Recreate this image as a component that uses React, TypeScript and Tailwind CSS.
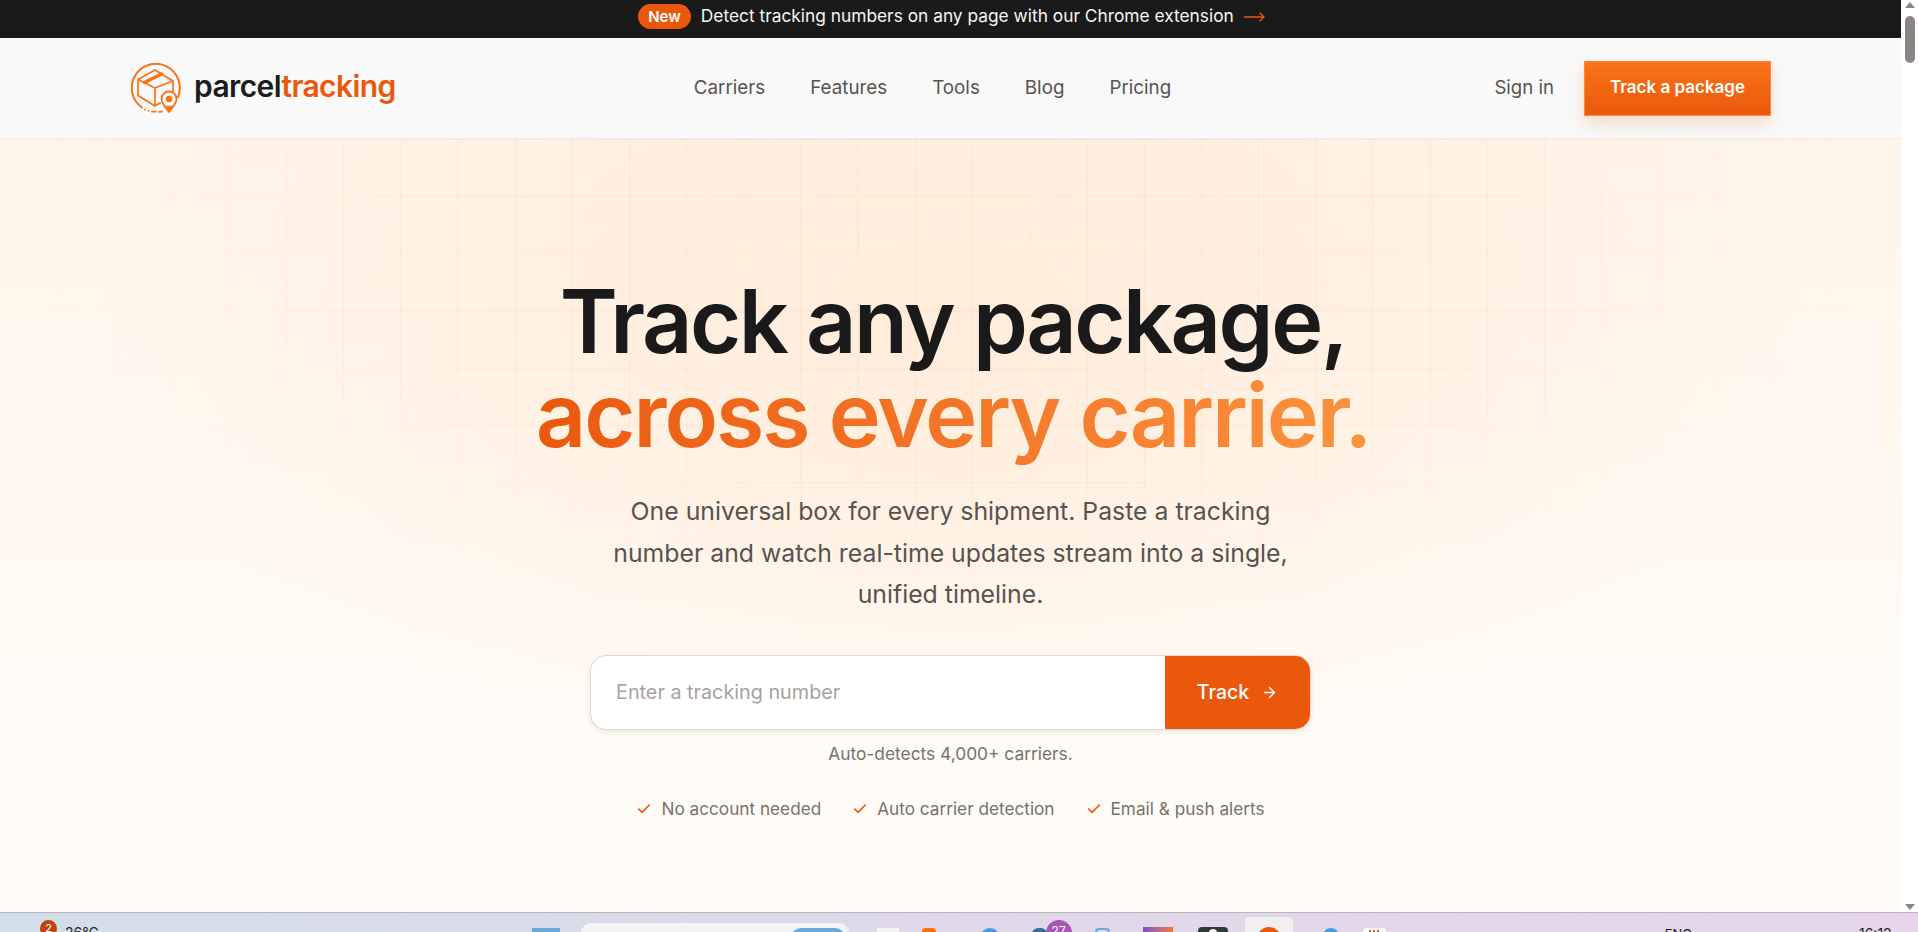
import React from 'react';
import { ArrowRight, Check } from 'lucide-react';

const navLinks = ['Carriers', 'Features', 'Tools', 'Blog', 'Pricing'];
const perks = ['No account needed', 'Auto carrier detection', 'Email & push alerts'];

const LogoMark: React.FC = () => (
  <svg viewBox="0 0 50 50" className="w-[50px] h-[50px] shrink-0" fill="none" stroke="#f97316" strokeLinecap="round" strokeLinejoin="round">
    <path d="M11 44.500A24 24 0 1 1 47 34" strokeWidth="2" />
    <path d="M14 46.500l.1 0M17.500 47.800l.1 0M21 48.700h4M28 48.800l3-.3" strokeWidth="1.800" />
    <path d="M24 7l18 11v10M24 7L7 16.500v16L24 43V25M7 16.500L24 25l18-7M24 43l5-3" strokeWidth="1.700" />
    <path d="M13.500 19.500l17-8.500" strokeWidth="3.500" />
    <path d="M38 49c-4.800-5.500-7.500-9-7.500-13a7.500 7.500 0 0 1 15 0c0 4-2.700 7.500-7.500 13z" fill="#f9f9f9" strokeWidth="1.800" />
    <path d="M34 43.500L38 49l4-5.500z" fill="#f97316" strokeWidth="1" />
    <circle cx="38" cy="36" r="3.300" fill="#f97316" stroke="none" />
  </svg>
);

const Header: React.FC = () => (
  <header className="h-[101px] shrink-0 flex items-center justify-between pl-[131px] pr-[130px] bg-[#f9f9f9] border-b border-[#ececec]">
    <div className="flex items-center gap-[14px]">
      <LogoMark />
      <span className="text-[30px] leading-none font-semibold tracking-[-0.6px] text-[#1c1c1c] pb-1 -ml-[1px]">
        parcel<span className="text-[#ea580c]">tracking</span>
      </span>
    </div>
    <nav className="flex items-center gap-[45px] -ml-[25px] text-[18.800px] font-normal text-[#57534e]">
      {navLinks.map((link) => (
        <a key={link}>{link}</a>
      ))}
    </nav>
    <div className="flex items-center gap-[30px]">
      <a className="text-[18.600px] font-normal text-[#57534e]">Sign in</a>
      <button className="w-[187px] h-[55px] bg-gradient-to-b from-[#f97316] to-[#ea580c] border border-[#fb8b3c] text-white text-[17px] font-semibold shadow-[0_8px_16px_rgba(234,88,12,0.18)]">
        Track a package
      </button>
    </div>
  </header>
);

const Hero: React.FC = () => (
  <main className="relative flex-1 min-h-0 flex flex-col items-center pt-[135px] bg-[radial-gradient(ellipse_45%_60%_at_50%_22%,#ffecda_0%,rgba(255,236,218,0)_100%),linear-gradient(to_bottom,#fff4e9_0%,#fff8f0_45%,#fffcf8_80%)]">
    <div className="absolute inset-0 bg-[linear-gradient(to_right,rgba(234,88,12,0.06)_1px,transparent_1px),linear-gradient(to_bottom,rgba(234,88,12,0.06)_1px,transparent_1px)] bg-[size:57.2px_57.2px] [mask-image:radial-gradient(ellipse_50%_50%_at_50%_12%,black_60%,transparent_100%)]" />
    <h1 className="relative pl-[5px] text-center text-[88px] leading-[94px] font-semibold tracking-[-2px] text-[#1a1a1a]">
      <span className="tracking-[-2.500px]">Track any package,</span>
      <br />
      <span className="bg-gradient-to-r from-[#ea580c] to-[#fb923c] bg-clip-text text-transparent">across every carrier.</span>
    </h1>
    <p className="relative mt-[29px] w-[700px] text-center text-[24.800px] leading-[41.600px] text-[#57534e]">
      One universal box for every shipment. Paste a tracking number and watch real-time updates stream into a single, unified timeline.
    </p>
    <div className="relative mt-[39px] w-[721px] h-[75px] flex rounded-2xl overflow-hidden bg-white border border-[#e0d8d2] shadow-[0_2px_6px_rgba(0,0,0,0.08)]">
      <div className="flex-1 flex items-center pl-[25px] pt-[1px] text-[19.800px] text-[#a8a29e]">Enter a tracking number</div>
      <button className="w-[145px] flex items-center justify-center gap-[12px] bg-[#ea580c] text-white text-[19.500px] font-medium">
        Track
        <ArrowRight size={17} />
      </button>
    </div>
    <p className="relative mt-[11px] text-[17.330px] leading-[26px] text-[#78716c]">Auto-detects 4,000+ carriers.</p>
    <ul className="relative mt-[29px] flex items-center gap-[31px] text-[17.200px] leading-[26px] text-[#78716c]">
      {perks.map((perk) => (
        <li key={perk} className="flex items-center gap-[9px]">
          <Check size={16} strokeWidth={2.5} className="text-[#ea580c]" />
          {perk}
        </li>
      ))}
    </ul>
  </main>
);

const Scrollbar: React.FC = () => (
  <div className="w-[17px] shrink-0 flex flex-col items-center justify-between bg-white pt-[2px] pb-[2px]">
    <div className="flex flex-col items-center">
      <div className="w-0 h-0 border-x-[5px] border-x-transparent border-b-[6px] border-b-[#8a8583]" />
      <div className="mt-[8px] w-[10px] h-[47px] rounded-full bg-[#8a8583]" />
    </div>
    <div className="w-0 h-0 border-x-[5px] border-x-transparent border-t-[6px] border-t-[#8a8583]" />
  </div>
);

// only the top few pixels of the Windows taskbar are visible in the shot
const Taskbar: React.FC = () => (
  <footer className="h-[20px] shrink-0 overflow-hidden border-t border-[#bdb5b9] bg-gradient-to-r from-[#d1dfe8] via-[#dfd8e8] via-50% to-[#e6d5ea] flex items-start text-[13px] text-[#222]">
    <div className="ml-[40px] mt-[7px] w-[17px] h-[17px] rounded-full bg-[#c2410c] text-white text-[11px] leading-[17px] text-center">2</div>
    <span className="ml-[8px] mt-[13px] leading-[14px] text-[14px]">26°C</span>
    <div className="ml-[433px] mt-[15px] w-[28px] h-[10px] bg-[#6aa9d8]" />
    <div className="ml-[21px] mt-[10px] w-[268px] h-[20px] rounded-full bg-[#f3f3f3] flex justify-end pr-[4px]">
      <div className="mt-[5px] w-[54px] h-[20px] rounded-full bg-[#6aa9d8]" />
    </div>
    <div className="ml-[28px] mt-[15px] w-[22px] h-[10px] bg-[#f4f4f4]" />
    <div className="ml-[23px] mt-[15px] w-[14px] h-[10px] rounded-t bg-[#f97316]" />
    <div className="ml-[44px] mt-[15px] w-[20px] h-[10px] rounded-t-full bg-[#4a9bd4]" />
    <div className="ml-[32px] mt-[15px] w-[15px] h-[10px] rounded-t-md bg-[#3d6d96]" />
    <div className="-ml-[1px] mt-[7px] w-[26px] h-[26px] rounded-full bg-[#a855b8] text-white text-[12px] leading-[22px] text-center">27</div>
    <div className="ml-[23px] mt-[15px] w-[15px] h-[10px] border-2 border-[#6aa9d8] rounded-t-sm" />
    <div className="ml-[33px] mt-[14px] w-[30px] h-[10px] bg-gradient-to-r from-[#7c4dcc] to-[#f97316]" />
    <div className="ml-[25px] mt-[14px] w-[30px] h-[10px] rounded-t bg-[#2f3a3a] flex justify-center">
      <div className="mt-[2px] w-[8px] h-[8px] rounded-full bg-white" />
    </div>
    <div className="ml-[17px] mt-[4px] w-[48px] h-[20px] rounded-t bg-[#f1eef1] flex justify-center">
      <div className="mt-[10px] w-[24px] h-[12px] rounded-t-full bg-[#ea580c]" />
    </div>
    <div className="ml-[30px] mt-[15px] w-[16px] h-[10px] rounded-t-full bg-[#4a9bd4]" />
    <div className="ml-[24px] mt-[15px] w-[23px] h-[10px] rounded-t-sm bg-white flex justify-center gap-[2px] pt-[2px]">
      <div className="w-[2px] h-[6px] bg-[#ea580c]" />
      <div className="w-[2px] h-[6px] bg-[#ea580c]" />
      <div className="w-[2px] h-[6px] bg-[#ea580c]" />
    </div>
    <span className="ml-[279px] mt-[14px] leading-[14px] text-[13px]">ENG</span>
    <span className="ml-[167px] mt-[14px] leading-[14px] text-[14px]">16:12</span>
  </footer>
);

const App: React.FC = () => (
  <div className="h-screen flex flex-col overflow-hidden bg-white font-['Inter',sans-serif]">
    <div className="flex-1 min-h-0 flex">
      <div className="flex-1 min-w-0 flex flex-col">
        <div className="h-[38px] shrink-0 bg-[#1a1a1a] flex items-center justify-center gap-[10px] pb-[6px] pl-[2px] text-[#f5f5f5] text-[17.330px]">
          <span className="h-[25px] px-[10px] rounded-full bg-[#ea580c] text-white text-[15px] leading-[25px] font-semibold">New</span>
          <span>Detect tracking numbers on any page with our Chrome extension</span>
          <svg viewBox="0 0 21 12" className="w-[21px] h-[12px] mt-[2px]" fill="none" stroke="#ea580c" strokeWidth="1.300">
            <path d="M0 6h20M15.500 1.500L20 6l-4.500 4.500" />
          </svg>
        </div>
        <Header />
        <Hero />
      </div>
      <Scrollbar />
    </div>
    <Taskbar />
  </div>
);

export default App;
